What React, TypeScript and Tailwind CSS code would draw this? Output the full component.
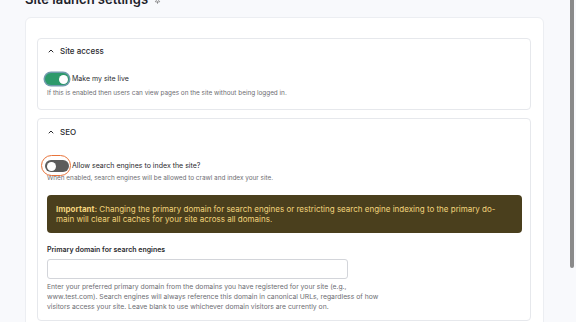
import { ChevronUp, Pin } from 'lucide-react'

function Toggle({ on }: { on: boolean }) {
  return on ? (
    <span className="relative -ml-[2px] flex h-[12px] w-[24px] shrink-0 items-center justify-end rounded-full bg-[#2d9a6b] pr-[1.5px] ring-[1.5px] ring-[#35708a]/70">
      <span className="h-[9px] w-[9px] rounded-full bg-white" />
    </span>
  ) : (
    <span className="relative -ml-[2px] flex h-[12px] w-[24px] shrink-0 items-center rounded-full bg-[#5c5c5c] pl-[1.5px]">
      <span className="h-[9px] w-[9px] rounded-full bg-white" />
      {/* annotation ring from the screenshot */}
      <span className="absolute -left-[4px] -top-[5px] h-[21px] w-[30px] rounded-full border-[1.5px] border-[#e8743b]" />
    </span>
  )
}

function SectionHeader({ title }: { title: string }) {
  return (
    <div className="flex h-[10px] items-center gap-[5px] text-[8px] font-medium leading-[10px] text-[#2a2a2e]">
      <ChevronUp size={8} strokeWidth={3} className="shrink-0" />
      <span>{title}</span>
    </div>
  )
}

export default function App() {
  return (
    <div className="flex h-[322px] w-[576px] overflow-hidden bg-[#f8f9fc] font-['Inter',sans-serif]">
      <div className="flex-1 pl-[25px] pr-[24px]">
        <div className="-mt-[9px] flex h-[16px] items-center gap-[6px]">
          <h1 className="text-[13px] font-semibold leading-[16px] text-[#1d2129]">Site launch settings</h1>
          <Pin size={7} strokeWidth={2} className="mt-[2px] text-[#555]" />
        </div>

        <div className="mt-[10px] h-[400px] rounded-[6px] border border-[#eceef2] bg-white pl-[11px] pr-[12px] pt-[20px]">
          {/* Site access */}
          <div className="rounded-[4px] border border-[#e6e8ec] pb-[12px] pl-[9px] pr-[8px] pt-[7px]">
            <SectionHeader title="Site access" />
            <div className="mt-[17px] flex h-[12px] items-center gap-[3px]">
              <Toggle on />
              <span className="text-[7px] leading-[12px] text-[#2a2a2e]">Make my site live</span>
            </div>
            <p className="mt-[4px] text-[6.4px] leading-[8px] text-[#6e6e73]">
              If this is enabled then users can view pages on the site without being logged in.
            </p>
          </div>

          {/* SEO */}
          <div className="mt-[8px] rounded-[4px] border border-[#e6e8ec] pb-[8px] pl-[9px] pr-[8px] pt-[8px]">
            <SectionHeader title="SEO" />
            <div className="mt-[23px] flex h-[12px] items-center gap-[3px]">
              <Toggle on={false} />
              <span className="text-[7px] leading-[12px] text-[#2a2a2e]">Allow search engines to index the site?</span>
            </div>
            <p className="mt-[2px] text-[6.4px] leading-[8px] text-[#6e6e73]">
              When enabled, search engines will be allowed to crawl and index your site.
            </p>

            <div className="mt-[13px] rounded-[4px] bg-[#4a3f1d] px-[9px] py-[9px] text-[8px] leading-[10px] text-[#f2d47c]">
              <p className="whitespace-nowrap">
                <span className="font-bold">Important:</span> Changing the primary domain for search engines or restricting
                search engine indexing to the primary do-
              </p>
              <p className="whitespace-nowrap">main will clear all caches for your site across all domains.</p>
            </div>

            <label className="mt-[12px] block text-[7px] font-semibold leading-[10px] text-[#2a2a2e]">
              Primary domain for search engines
            </label>
            <input
              type="text"
              className="mt-[4px] block h-[20px] w-[301px] rounded-[3px] border border-[#d3d5da] bg-white px-[5px] text-[7px] outline-none"
            />
            <p className="mt-[3px] whitespace-nowrap text-[6.8px] leading-[10px] text-[#6e6e73]">
              Enter your preferred primary domain from the domains you have registered for your site (e.g.,
              <br />
              www.test.com). Search engines will always reference this domain in canonical URLs, regardless of how
              <br />
              visitors access your site. Leave blank to use whichever domain visitors are currently on.
            </p>
          </div>
        </div>
      </div>

      {/* page scrollbar */}
      <div className="flex w-[8px] justify-center">
        <div className="h-[268px] w-[4px] rounded-b-[2px] bg-[#8a8a8a]" />
      </div>
    </div>
  )
}
